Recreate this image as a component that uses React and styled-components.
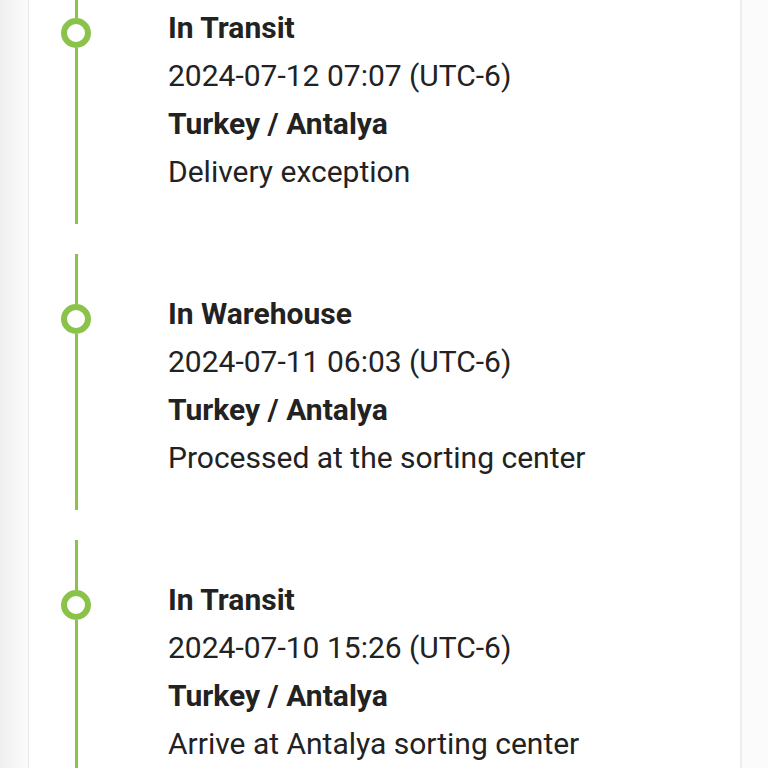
import React from "react";
import styled, { createGlobalStyle } from "styled-components";

const GlobalStyle = createGlobalStyle`
  html, body {
    margin: 0;
    padding: 0;
    background: #fbfbfb;
    font-family: Roboto, "Liberation Sans", sans-serif;
    overflow: hidden;
  }
`;

const events = [
  {
    status: "In Transit",
    time: "2024-07-12 07:07 (UTC-6)",
    place: "Turkey / Antalya",
    detail: "Delivery exception",
  },
  {
    status: "In Warehouse",
    time: "2024-07-11 06:03 (UTC-6)",
    place: "Turkey / Antalya",
    detail: "Processed at the sorting center",
  },
  {
    status: "In Transit",
    time: "2024-07-10 15:26 (UTC-6)",
    place: "Turkey / Antalya",
    detail: "Arrive at Antalya sorting center",
  },
];

function App() {
  return (
    <Page>
      <GlobalStyle />
      <SideStrip />
      <Card>
        <Timeline>
          {events.map((ev, i) => (
            <Item key={i}>
              <Rail>
                <Segment $size="50px" />
                <Dot />
                <Segment $grow />
              </Rail>
              <Info>
                <Title>{ev.status}</Title>
                <Line>{ev.time}</Line>
                <Title>{ev.place}</Title>
                <Line>{ev.detail}</Line>
              </Info>
            </Item>
          ))}
        </Timeline>
      </Card>
      <RightStrip />
    </Page>
  );
}

const Page = styled.div`
  display: flex;
  height: 768px;
  width: 768px;
  overflow: hidden;
`;

const SideStrip = styled.div`
  width: 28px;
  flex-shrink: 0;
  background: linear-gradient(to right, #efefef, #f7f7f7 60%, #fbfbfb);
`;

const Card = styled.div`
  width: 711px;
  flex-shrink: 0;
  background: #ffffff;
  border-left: 1px solid #e6e6e6;
  border-right: 2px solid #ededed;
  overflow: hidden;
`;

const RightStrip = styled.div`
  flex: 1;
  background: #fbfbfb;
`;

const Timeline = styled.div`
  display: flex;
  flex-direction: column;
  margin-top: -32px;
`;

const Item = styled.div`
  display: flex;
  height: 286px;
`;

const Rail = styled.div`
  width: 30px;
  margin-left: 32px;
  height: 256px;
  display: flex;
  flex-direction: column;
  align-items: center;
  flex-shrink: 0;
`;

const Segment = styled.div`
  width: 3px;
  background: #8bc34a;
  height: ${(p) => p.$size || "auto"};
  flex: ${(p) => (p.$grow ? 1 : "none")};
`;

const Dot = styled.div`
  width: 18px;
  height: 18px;
  border: 6px solid #8bc34a;
  border-radius: 50%;
  background: #ffffff;
  flex-shrink: 0;
`;

const Info = styled.div`
  margin-left: 77px;
  padding-top: 36px;
  display: flex;
  flex-direction: column;
  color: #222222;
`;

const Title = styled.div`
  font-size: 30px;
  font-weight: 700;
  line-height: 48px;
  white-space: nowrap;
`;

const Line = styled.div`
  font-size: 30px;
  font-weight: 400;
  line-height: 48px;
  white-space: nowrap;
`;

export default App;
